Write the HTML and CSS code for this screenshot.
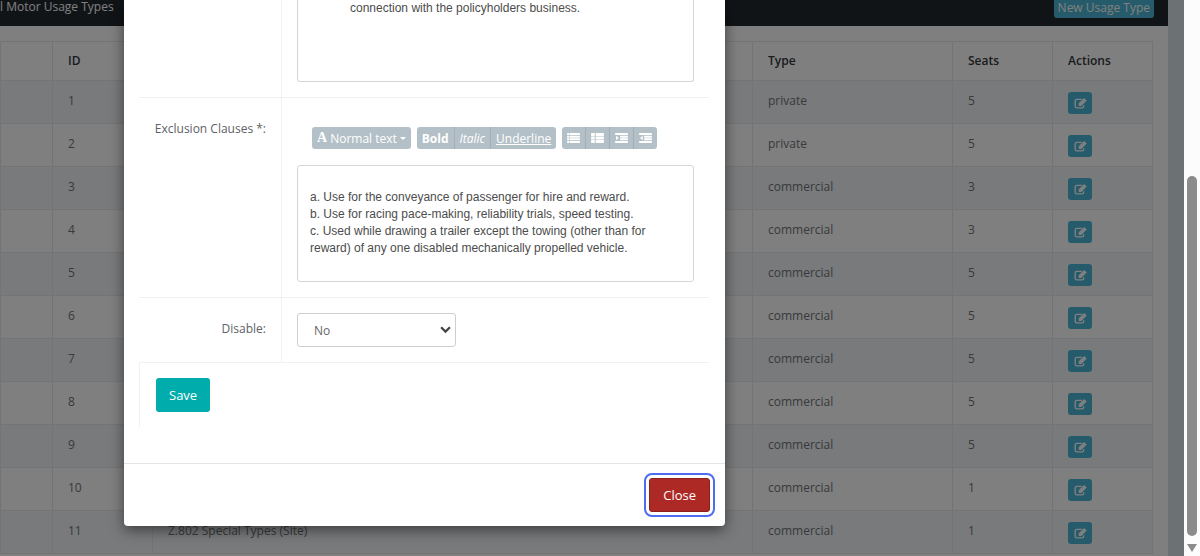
FILE: index.html
```
<!DOCTYPE html>
<html lang="en">
<head>
    <meta charset="UTF-8">
    <meta name="viewport" content="width=device-width, initial-scale=1.0">
    <title>Motor Usage Types</title>
    <link rel="stylesheet" href="styles.css">
</head>
<body>
    <!-- Icons -->
    <svg class="sprite" aria-hidden="true">
        <symbol id="icon-edit" viewBox="0 0 14 12">
            <path d="M8.500 1.500H3Q1.200 1.500 1.200 3.200V9Q1.200 10.800 3 10.800H8.800Q10.500 10.800 10.500 9V7.800" fill="none" stroke="currentColor" stroke-width="1.500"/>
            <path d="M11 0 13.800 2.800 8 8.600H5V5.800Z" fill="currentColor"/>
        </symbol>
        <symbol id="icon-list" viewBox="0 0 14 11">
            <path d="M0 0h2v2.300H0zM2.600 0H14v2.300H2.600zM0 2.900h2v2.300H0zM2.600 2.900H14v2.300H2.600zM0 5.800h2v2.300H0zM2.600 5.800H14v2.300H2.600zM0 8.700h2V11H0zM2.600 8.700H14V11H2.600z" fill="currentColor"/>
        </symbol>
        <symbol id="icon-th-list" viewBox="0 0 14 11">
            <path d="M0 0h4v3.200H0zM5 0h9v3.200H5zM0 3.900h4v3.200H0zM5 3.900h9v3.200H5zM0 7.800h4V11H0zM5 7.800h9V11H5z" fill="currentColor"/>
        </symbol>
        <symbol id="icon-outdent" viewBox="0 0 14 11">
            <path d="M0 0h14v2.300H0zM5.500 2.900H14v2.300H5.500zM5.500 5.800H14v2.300H5.500zM0 8.700h14V11H0zM1 3l3 2.500-3 2.500z" fill="currentColor"/>
        </symbol>
        <symbol id="icon-indent" viewBox="0 0 14 11">
            <path d="M0 0h14v2.300H0zM5.500 2.900H14v2.300H5.500zM5.500 5.800H14v2.300H5.500zM0 8.700h14V11H0zM4 3v5L1 5.500z" fill="currentColor"/>
        </symbol>
    </svg>

    <div class="page">
        <!-- Usage types list -->
        <div class="panel">
            <div class="panel-heading">
                <span>l Motor Usage Types</span>
                <button class="btn-new" type="button">New Usage Type</button>
            </div>
            <div class="panel-body">
                <table class="usage-table">
                    <colgroup>
                        <col class="col-first"><col class="col-small"><col><col class="col-type"><col class="col-small"><col class="col-small">
                    </colgroup>
                    <thead>
                        <tr><th></th><th>ID</th><th></th><th>Type</th><th>Seats</th><th>Actions</th></tr>
                    </thead>
                    <tbody>
                        <tr><td></td><td>1</td><td></td><td>private</td><td>5</td><td><button class="btn-edit" type="button" aria-label="Edit"><svg><use href="#icon-edit"/></svg></button></td></tr>
                        <tr><td></td><td>2</td><td></td><td>private</td><td>5</td><td><button class="btn-edit" type="button" aria-label="Edit"><svg><use href="#icon-edit"/></svg></button></td></tr>
                        <tr><td></td><td>3</td><td></td><td>commercial</td><td>3</td><td><button class="btn-edit" type="button" aria-label="Edit"><svg><use href="#icon-edit"/></svg></button></td></tr>
                        <tr><td></td><td>4</td><td></td><td>commercial</td><td>3</td><td><button class="btn-edit" type="button" aria-label="Edit"><svg><use href="#icon-edit"/></svg></button></td></tr>
                        <tr><td></td><td>5</td><td></td><td>commercial</td><td>5</td><td><button class="btn-edit" type="button" aria-label="Edit"><svg><use href="#icon-edit"/></svg></button></td></tr>
                        <tr><td></td><td>6</td><td></td><td>commercial</td><td>5</td><td><button class="btn-edit" type="button" aria-label="Edit"><svg><use href="#icon-edit"/></svg></button></td></tr>
                        <tr><td></td><td>7</td><td></td><td>commercial</td><td>5</td><td><button class="btn-edit" type="button" aria-label="Edit"><svg><use href="#icon-edit"/></svg></button></td></tr>
                        <tr><td></td><td>8</td><td></td><td>commercial</td><td>5</td><td><button class="btn-edit" type="button" aria-label="Edit"><svg><use href="#icon-edit"/></svg></button></td></tr>
                        <tr><td></td><td>9</td><td></td><td>commercial</td><td>5</td><td><button class="btn-edit" type="button" aria-label="Edit"><svg><use href="#icon-edit"/></svg></button></td></tr>
                        <tr><td></td><td>10</td><td></td><td>commercial</td><td>1</td><td><button class="btn-edit" type="button" aria-label="Edit"><svg><use href="#icon-edit"/></svg></button></td></tr>
                        <tr><td></td><td>11</td><td>Z.802 Special Types (Site)</td><td>commercial</td><td>1</td><td><button class="btn-edit" type="button" aria-label="Edit"><svg><use href="#icon-edit"/></svg></button></td></tr>
                    </tbody>
                </table>
            </div>
        </div>

        <!-- Edit dialog -->
        <div class="backdrop">
            <div class="modal" role="dialog" aria-label="Usage type">
                <form class="modal-body">
                    <div class="form-row">
                        <div class="form-label"></div>
                        <div class="form-field field-top">
                            <div class="editor editor-top" contenteditable="true" role="textbox" aria-label="Usage clauses">connection with the policyholders business.</div>
                        </div>
                    </div>
                    <div class="form-row">
                        <div class="form-label" id="exclusion-label">Exclusion Clauses *:</div>
                        <div class="form-field">
                            <div class="toolbar">
                                <div class="btn-group">
                                    <button type="button"><b class="font-mark">A</b> Normal text <span class="caret"></span></button>
                                </div>
                                <div class="btn-group">
                                    <button type="button"><b>Bold</b></button>
                                    <button type="button"><i>Italic</i></button>
                                    <button type="button"><u>Underline</u></button>
                                </div>
                                <div class="btn-group btn-icons">
                                    <button type="button" aria-label="Unordered list"><svg><use href="#icon-list"/></svg></button>
                                    <button type="button" aria-label="Ordered list"><svg><use href="#icon-th-list"/></svg></button>
                                    <button type="button" aria-label="Outdent"><svg><use href="#icon-outdent"/></svg></button>
                                    <button type="button" aria-label="Indent"><svg><use href="#icon-indent"/></svg></button>
                                </div>
                            </div>
                            <div class="editor editor-full" contenteditable="true" role="textbox" aria-labelledby="exclusion-label">a. Use for the conveyance of passenger for hire and reward.<br>b. Use for racing pace-making, reliability trials, speed testing.<br>c. Used while drawing a trailer except the towing (other than for reward) of any one disabled mechanically propelled vehicle.</div>
                        </div>
                    </div>
                    <div class="form-row">
                        <label class="form-label" for="disable">Disable:</label>
                        <div class="form-field">
                            <div class="select-wrap">
                                <select id="disable">
                                    <option>No</option>
                                    <option>Yes</option>
                                </select>
                                <svg class="chevron" viewBox="0 0 10 7"><path d="M1 1 5 5 9 1" fill="none" stroke="#444" stroke-width="2"/></svg>
                            </div>
                        </div>
                    </div>
                    <div class="form-actions">
                        <button class="btn btn-save" type="button">Save</button>
                    </div>
                </form>
                <div class="modal-footer">
                    <button class="btn btn-close" type="button">Close</button>
                </div>
            </div>
        </div>
    </div>

    <div class="scrollbar">
        <div class="thumb"></div>
        <div class="arrow"></div>
    </div>
</body>
</html>
```

FILE: styles.css
```
* {
    box-sizing: border-box;
}
body {
    margin: 0;
    height: 100vh;
    display: flex;
    overflow: hidden;
    font-family: "Open Sans", sans-serif;
    font-size: 12px;
    line-height: 18px;
    color: #5d6266;
}
button,
select {
    font-family: inherit;
    font-size: inherit;
    cursor: pointer;
}
.sprite {
    display: none;
}
.page {
    flex: 1;
    position: relative;
    overflow: hidden;
    background: #d9e2e7;
    padding-right: 16px;
}

/* list */
.panel {
    background: #fff;
}
.panel-heading {
    height: 26px;
    display: flex;
    justify-content: space-between;
    align-items: flex-start;
    padding-right: 14px;
    background: #22292e;
    color: #fff;
    line-height: 14px;
}
.btn-new {
    height: 18px;
    padding: 0 4px 3px;
    border: 0;
    border-radius: 0 0 3px 3px;
    background: #4ab7d5;
    color: #fff;
    line-height: 15px;
}
.panel-body {
    padding: 15px 15px 15px 0;
}
.usage-table {
    width: 100%;
    table-layout: fixed;
    border-collapse: collapse;
}
.col-first {
    width: 52px;
}
.col-small {
    width: 100px;
}
.col-type {
    width: 200px;
}
.usage-table th,
.usage-table td {
    border: 1px solid #e6e9eb;
    padding: 0 15px;
    text-align: left;
}
.usage-table th {
    height: 39px;
    color: #33383c;
    font-weight: 600;
}
.usage-table td {
    height: 43px;
    padding-top: 11px;
    vertical-align: top;
    color: #707478;
}
.usage-table tbody tr:nth-child(odd) {
    background: #f1f4f7;
}
.btn-edit {
    display: flex;
    align-items: center;
    justify-content: center;
    width: 24px;
    height: 22px;
    padding: 0;
    border: 0;
    border-radius: 3px;
    background: #4ab7d5;
    color: #fff;
}
.btn-edit svg {
    width: 13px;
    height: 11px;
}

/* dialog */
.backdrop {
    position: absolute;
    inset: 0;
    padding-left: 124px;
    background: rgba(0, 0, 0, 0.5);
}
.modal {
    width: 601px;
    background: #fff;
    border-radius: 0 0 4px 4px;
    box-shadow: 0 4px 14px rgba(0, 0, 0, 0.5);
}
.modal-body {
    padding: 0 16px 36px 15px;
}
.form-row {
    display: grid;
    grid-template-columns: 142px 1fr;
    border-bottom: 1px solid #f0f1f2;
}
.form-label {
    padding: 22px 15px 0 0;
    text-align: right;
}
.form-field {
    padding: 15px;
    border-left: 1px solid #f0f1f2;
}
.field-top {
    padding-top: 0;
}
.editor {
    border: 1px solid #d3d7da;
    border-radius: 3px;
    font-family: "Liberation Sans", Arial, sans-serif;
    line-height: 17px;
    color: #4c4c4c;
}
.editor-top {
    height: 82px;
    padding: 0 52px;
    border-top: 0;
    border-radius: 0 0 3px 3px;
}
.editor-full {
    height: 117px;
    padding: 23px 12px;
}
.toolbar {
    display: flex;
    gap: 6px;
    padding: 14px 15px 16px;
}
.btn-group {
    display: flex;
    overflow: hidden;
    border-radius: 3px;
}
.btn-group button {
    display: flex;
    align-items: center;
    gap: 3px;
    height: 22px;
    padding: 0 5px;
    border: 0;
    border-right: 1px solid #a2afb6;
    background: #b4c0c7;
    color: #fff;
}
.btn-group button:last-child {
    border-right: 0;
}
.btn-icons svg {
    width: 13px;
    height: 10px;
}
.font-mark {
    font-family: "Liberation Serif", serif;
    font-size: 14px;
}
.caret {
    border: 3px solid transparent;
    border-top-color: #fff;
    border-bottom: 0;
}
.select-wrap {
    position: relative;
    width: 159px;
}
.select-wrap select {
    width: 100%;
    height: 34px;
    padding: 0 16px;
    border: 1px solid #ccd0d3;
    border-radius: 3px;
    background: #fff;
    color: #666;
    appearance: none;
}
.chevron {
    position: absolute;
    right: 5px;
    top: 13px;
    width: 11px;
    height: 8px;
    pointer-events: none;
}
.form-actions {
    padding: 15px 16px;
    border-left: 1px solid #f0f1f2;
}
.btn {
    display: block;
    height: 34px;
    padding: 0 13px;
    border: 0;
    border-radius: 3px;
    color: #fff;
    font-size: 13px;
}
.btn-save {
    background: #00acac;
}
.modal-footer {
    display: flex;
    justify-content: flex-end;
    padding: 14px 15px;
    border-top: 1px solid #e2e4e5;
}
.btn-close {
    border: 1px solid #8f1d1c;
    background: #ac2925;
    outline: 2px solid #4d6df0;
    outline-offset: 3px;
}

/* scrollbar */
.scrollbar {
    display: flex;
    flex-direction: column;
    align-items: center;
    gap: 8px;
    width: 16px;
    padding: 176px 0 4px;
    background: #fcfcfc;
}
.thumb {
    flex: 1;
    width: 10px;
    border-radius: 5px;
    background: #8b8b8b;
}
.arrow {
    border: 5px solid transparent;
    border-top: 8px solid #8b8b8b;
    border-bottom: 0;
}
```
